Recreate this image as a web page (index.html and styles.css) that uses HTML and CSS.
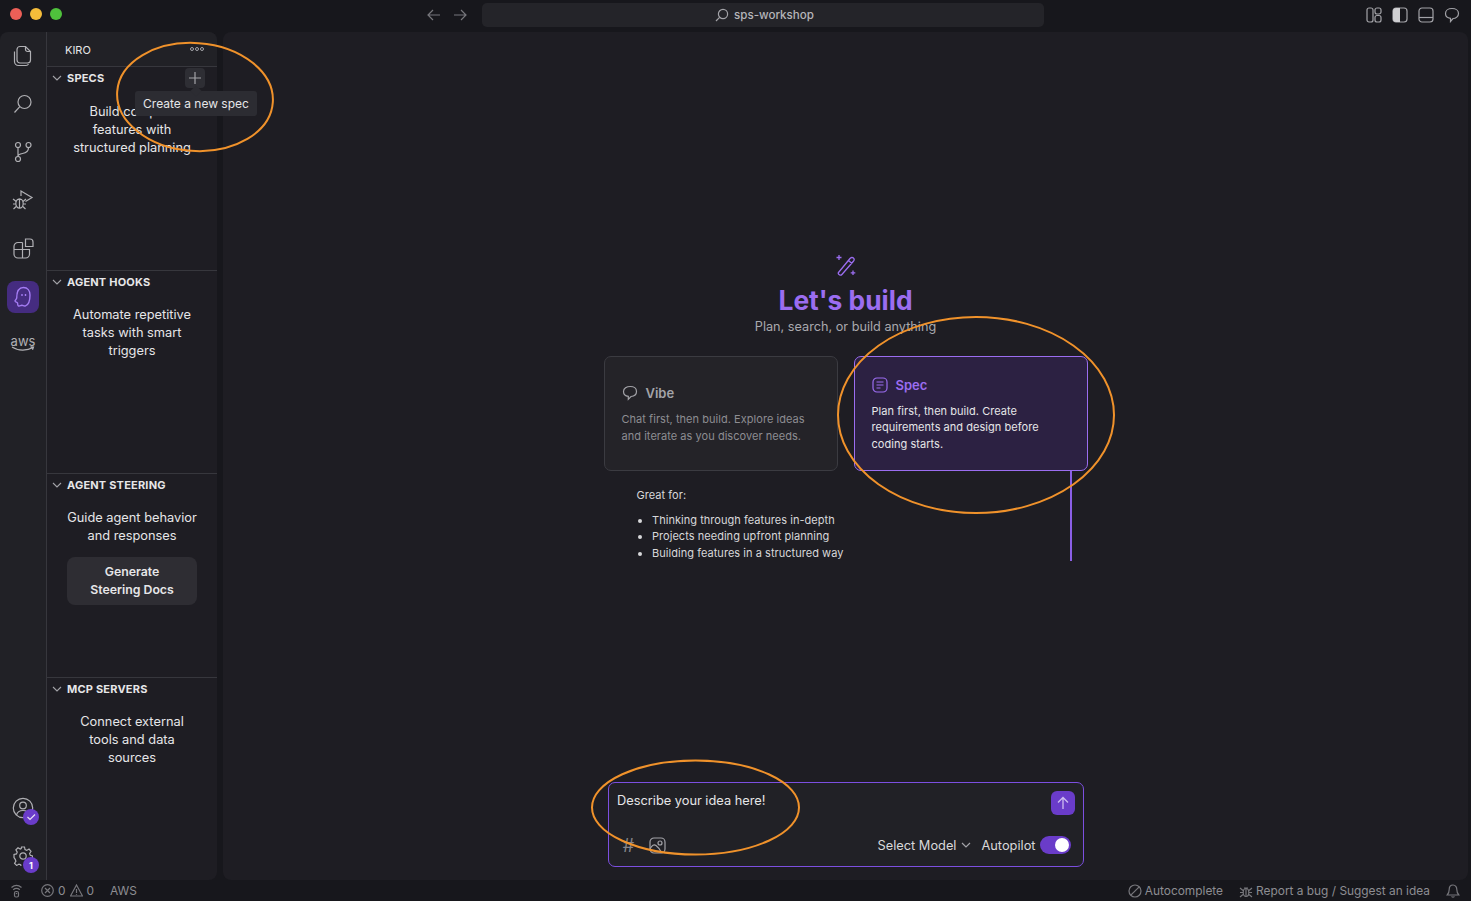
FILE: index.html
```html
<!DOCTYPE html>
<html lang="en">
<head>
  <meta charset="UTF-8">
  <title>sps-workshop</title>
  <link rel="stylesheet" href="styles.css">
</head>
<body>
  <!-- title bar -->
  <header class="titlebar">
    <div class="traffic">
      <span class="dot red"></span>
      <span class="dot yellow"></span>
      <span class="dot green"></span>
    </div>
    <div class="nav-arrows">
      <svg class="ico" width="16" height="16" viewBox="0 0 16 16"><path d="M14 8H2.500M7 3 2 8l5 5"/></svg>
      <svg class="ico" width="16" height="16" viewBox="0 0 16 16"><path d="M2 8h11.500M9 3l5 5-5 5"/></svg>
    </div>
    <div class="command">
      <svg class="ico" width="14" height="14" viewBox="0 0 14 14"><circle cx="8" cy="6" r="4.600"/><path d="M4.600 9.400 1 13"/></svg>
      <span>sps-workshop</span>
    </div>
    <div class="layout-icons">
      <svg class="ico" width="16" height="16" viewBox="0 0 16 16"><rect x="1" y="1" width="6" height="14" rx="2"/><rect x="9" y="1" width="6" height="6" rx="2"/><rect x="9" y="8.500" width="6" height="6.500" rx="2"/></svg>
      <svg class="ico" width="16" height="16" viewBox="0 0 16 16"><rect x="1" y="1" width="14" height="14" rx="3"/><path class="fill" d="M8 1H4a3 3 0 0 0-3 3v8a3 3 0 0 0 3 3h4z"/></svg>
      <svg class="ico" width="16" height="16" viewBox="0 0 16 16"><rect x="1" y="1" width="14" height="14" rx="3"/><path d="M1 10.500h14"/></svg>
      <svg class="ico" width="16" height="16" viewBox="0 0 16 16"><path d="M8 1.500c3.800 0 6.500 2 6.500 5s-2.700 5-5.500 5l-2.500 3v-3.200C3.500 11 1.500 9.300 1.500 6.500c0-3 2.700-5 6.500-5z"/></svg>
    </div>
  </header>

  <div class="workbench">
    <!-- activity bar -->
    <nav class="activity">
      <div class="activity-top">
        <a class="act-item">
          <svg class="ico" width="20" height="22" viewBox="0 0 20 22"><path d="M7 1.500h5.500L17.500 6.500v8.500a3 3 0 0 1-3 3H7a3 3 0 0 1-3-3V4.500a3 3 0 0 1 3-3z"/><path d="M12.500 1.500v3a2 2 0 0 0 2 2h3"/><path d="M1.500 6.500v10a4 4 0 0 0 4 4h7.500a3 3 0 0 0 2.500-1.500"/></svg>
        </a>
        <a class="act-item">
          <svg class="ico" width="20" height="20" viewBox="0 0 20 20"><circle cx="11.500" cy="8" r="6.500"/><path d="M6.800 12.700 1.500 18.500"/></svg>
        </a>
        <a class="act-item">
          <svg class="ico" width="20" height="22" viewBox="0 0 20 22"><circle cx="5" cy="4" r="2.500"/><circle cx="15.500" cy="4" r="2.500"/><circle cx="5" cy="18" r="2.500"/><path d="M5 6.500v9M15.500 6.500c0 4.500-3 5.500-6 6-2 .3-4.500 1-4.500 3"/></svg>
        </a>
        <a class="act-item">
          <svg class="ico" width="22" height="22" viewBox="0 0 22 22"><path d="M9 7V2l11 6.500-6.500 4"/><ellipse cx="7.500" cy="14.500" rx="3.700" ry="4.700"/><path d="M5 10.500h5M1 10l3.300 2.500M1 15h2.800M1.500 20l2.700-2.500M14 10l-3 2.500M14 15h-2.800M13.500 20l-2.700-2.500M7.500 10v9"/></svg>
        </a>
        <a class="act-item">
          <svg class="ico" width="21" height="21" viewBox="0 0 21 21"><path d="M9.500 4.500H5a4 4 0 0 0-4 4V16a4 4 0 0 0 4 4h7.500a4 4 0 0 0 4-4v-4.500h-15M9.500 4.500v15"/><path d="M12.500 1h4.500a3 3 0 0 1 3 3v4.500h-7.500z"/></svg>
        </a>
        <a class="act-item active">
          <svg class="kiro" width="18" height="22" viewBox="0 0 18 22"><path d="M9.500 1.500c4 0 6.500 3.200 6.500 7.500 0 4.800-.5 9.500-4.500 10.800-1.700.6-2.500-.8-3.700-.6-1.400.3-2.300 1.300-3.500.6-1-.6-.3-2-.8-2.800-.7-.9-2.300-.8-2.500-2 0-1.100 1.400-1.500 1.700-2.800C2.700 9.500 2.800 1.500 9.500 1.500z"/><path d="M8 8v2M11.500 8v2"/></svg>
        </a>
        <a class="act-item aws">aws
          <svg width="24" height="6" viewBox="0 0 24 6"><path d="M1 1c6 4 15 4 21 .5M19.500.8l3 .2-1 2.700"/></svg>
        </a>
      </div>
      <div class="activity-bottom">
        <a class="act-item">
          <svg class="ico" width="22" height="22" viewBox="0 0 22 22"><circle cx="11" cy="11" r="9.700"/><circle cx="11" cy="8.500" r="3.300"/><path d="M4.500 18c.8-3 3.500-4.500 6.500-4.500s5.700 1.500 6.500 4.500"/></svg>
          <span class="badge"><svg width="10" height="10" viewBox="0 0 10 10"><path d="m1.500 5 2.500 2.500 5-5"/></svg></span>
        </a>
        <a class="act-item">
          <svg class="ico" width="20" height="20" viewBox="0 0 20 20"><circle cx="10" cy="10" r="3.200"/><path d="M8.500 1h3l.5 2.600 1.700.8 2.300-1.300 2 2.200-1.400 2.200.7 1.800 2.200.6v3l-2.300.6-.7 1.700 1.300 2.200-2.100 2.100-2.200-1.300-1.700.7-.6 2.200h-3l-.5-2.300-1.800-.7-2.200 1.300-2.100-2.100 1.300-2.200-.7-1.700L1 11.500v-3l2.500-.6.700-1.800L2.900 3.900 5 1.800l2.200 1.300 1-.5z"/></svg>
          <span class="badge">1</span>
        </a>
      </div>
    </nav>

    <!-- side bar -->
    <aside class="sidebar">
      <div class="side-title">
        <span>KIRO</span>
        <span class="more"><i></i><i></i><i></i></span>
      </div>
      <section class="panel panel-specs">
        <h3 class="panel-head">
          <svg class="chev" width="10" height="10" viewBox="0 0 10 10"><path d="m1 3 4 4 4-4"/></svg>SPECS
          <span class="add-btn"><svg class="ico" width="14" height="14" viewBox="0 0 14 14"><path d="M7 1v12M1 7h12"/></svg></span>
        </h3>
        <p class="panel-text">Build complex<br>features with<br>structured planning</p>
        <div class="tooltip">Create a new spec</div>
      </section>
      <section class="panel">
        <h3 class="panel-head">
          <svg class="chev" width="10" height="10" viewBox="0 0 10 10"><path d="m1 3 4 4 4-4"/></svg>AGENT HOOKS
        </h3>
        <p class="panel-text">Automate repetitive<br>tasks with smart<br>triggers</p>
      </section>
      <section class="panel">
        <h3 class="panel-head">
          <svg class="chev" width="10" height="10" viewBox="0 0 10 10"><path d="m1 3 4 4 4-4"/></svg>AGENT STEERING
        </h3>
        <p class="panel-text">Guide agent behavior<br>and responses</p>
        <div class="gen-btn">Generate<br>Steering Docs</div>
      </section>
      <section class="panel">
        <h3 class="panel-head">
          <svg class="chev" width="10" height="10" viewBox="0 0 10 10"><path d="m1 3 4 4 4-4"/></svg>MCP SERVERS
        </h3>
        <p class="panel-text">Connect external<br>tools and data<br>sources</p>
      </section>
    </aside>

    <!-- editor -->
    <main class="editor">
      <div class="welcome">
        <svg class="wand" width="22" height="22" viewBox="0 0 22 22"><path d="M3.500 18.500 15 4.500c1-1.200 2.500-1.300 3.400-.5s.9 2.200 0 3.300L6.900 20.500c-.7.800-1.700.8-2.500.2-.9-.6-1.500-1.400-.9-2.200zM13.500 6.500l3.500 3"/><path d="M4 1v5M1.500 3.500h5M18 16.500v4.500M15.700 18.800h4.600"/></svg>
        <h1>Let's build</h1>
        <p class="sub">Plan, search, or build anything</p>
        <div class="cards">
          <div class="card">
            <div class="card-title">
              <svg class="ico" width="16" height="16" viewBox="0 0 16 16"><path d="M8.300 1.500c3.500 0 6.200 1.900 6.200 5s-2.700 4.800-5.500 5l-2.700 2.800v-2.900C3.300 11 1.500 9.300 1.500 6.500c0-3.100 3.200-5 6.800-5z"/></svg>
              <span>Vibe</span>
            </div>
            <p>Chat first, then build. Explore ideas and iterate as you discover needs.</p>
          </div>
          <div class="card selected">
            <div class="card-title">
              <svg class="ico" width="16" height="16" viewBox="0 0 16 16"><rect x="1" y="1" width="14" height="14" rx="4"/><path d="M4.500 5h7M4.500 8h7M4.500 11h4"/></svg>
              <span>Spec</span>
            </div>
            <p>Plan first, then build. Create requirements and design before coding starts.</p>
          </div>
        </div>
        <div class="great-for">
          <p>Great for:</p>
          <ul>
            <li>Thinking through features in-depth</li>
            <li>Projects needing upfront planning</li>
            <li>Building features in a structured way</li>
          </ul>
        </div>
      </div>

      <div class="chat">
        <div class="chat-top">
          <span class="prompt">Describe your idea here!</span>
          <button class="send"><svg width="14" height="14" viewBox="0 0 14 14"><path d="M7 13V1.500M2 6.500l5-5 5 5"/></svg></button>
        </div>
        <div class="chat-bottom">
          <div class="chat-tools">
            <span class="hash">#</span>
            <svg class="ico" width="17" height="17" viewBox="0 0 17 17"><rect x="1" y="1" width="15" height="15" rx="4"/><circle cx="11" cy="6" r="2"/><path d="M1 12c2-4 4-5 6-3.500s4 4 5.500 7"/></svg>
          </div>
          <div class="chat-opts">
            <span>Select Model</span>
            <svg class="ico" width="10" height="10" viewBox="0 0 10 10"><path d="m1 3 4 4 4-4"/></svg>
            <span class="pilot">Autopilot</span>
            <span class="toggle"><i></i></span>
          </div>
        </div>
      </div>
    </main>
  </div>

  <!-- status bar -->
  <footer class="statusbar">
    <div class="status-left">
      <svg class="ico" width="13" height="14" viewBox="0 0 13 14"><path d="M1.500 3.500c3-2.500 7-2.500 10 0M3.200 5.700c2-1.500 4.600-1.500 6.600 0"/><rect x="4.500" y="7.500" width="4" height="5.500" rx="1.500"/><path d="M5.800 9.500h1.400"/></svg>
      <span class="problems">
        <svg class="ico" width="13" height="13" viewBox="0 0 13 13"><circle cx="6.500" cy="6.500" r="5.800"/><path d="m4 4 5 5M9 4l-5 5"/></svg>0
        <svg class="ico" width="13" height="13" viewBox="0 0 13 13"><path d="M6.500 1 12.500 12H.5zM6.500 5v4M6.500 10v.8"/></svg>0
      </span>
      <span class="aws-label">AWS</span>
    </div>
    <div class="status-right">
      <span class="stat-item">
        <svg class="ico" width="14" height="14" viewBox="0 0 14 14"><circle cx="7" cy="7" r="6"/><path d="M2.800 11.200 11.200 2.800"/></svg>Autocomplete
      </span>
      <span class="stat-item">
        <svg class="ico" width="14" height="14" viewBox="0 0 14 14"><ellipse cx="7" cy="8.500" rx="2.800" ry="4"/><path d="M5 4h4M1 4l3 2.500M1 8.500h3M1 13l3-2.500M13 4l-3 2.500M13 8.500h-3M13 13l-3-2.500M7 4.500V12.500"/></svg>Report a bug / Suggest an idea
      </span>
      <svg class="ico" width="14" height="14" viewBox="0 0 14 14"><path d="M7 1c-2.500 0-3.800 2-3.800 4.500 0 3-.7 4-2 5.500h11.600c-1.300-1.500-2-2.500-2-5.500C10.800 3 9.500 1 7 1zM5.500 12.500c.4.700 2.600.7 3 0"/></svg>
    </div>
  </footer>

  <!-- orange callouts drawn on top of the screenshot -->
  <svg class="callouts" width="1471" height="901" viewBox="0 0 1471 901">
    <ellipse cx="195" cy="97" rx="78" ry="54" transform="rotate(4 195 97)"/>
    <ellipse cx="976" cy="415" rx="138" ry="98"/>
    <ellipse cx="695.500" cy="807.500" rx="103.500" ry="47"/>
  </svg>
</body>
</html>
```

FILE: styles.css
```css
* {
  box-sizing: border-box;
}
html, body {
  height: 100%;
}
body {
  margin: 0;
  display: flex;
  flex-direction: column;
  height: 901px;
  overflow: hidden;
  background: #17171c;
  color: #e6e6e8;
  font-family: Inter, "Noto Sans", sans-serif;
  font-size: 13px;
}
.ico {
  fill: none;
  stroke: #a3a3a8;
  stroke-width: 1.2;
  flex: none;
}
.ico .fill {
  fill: #cfcfd2;
  stroke: none;
}

/* title bar */
.titlebar {
  height: 32px;
  flex: none;
  display: flex;
  align-items: center;
  padding: 0 0 2px 10px;
}
.traffic {
  display: flex;
  gap: 8px;
  margin-top: -2px;
}
.dot {
  width: 12px;
  height: 12px;
  border-radius: 50%;
}
.red { background: #ed5f57; }
.yellow { background: #f5bd3a; }
.green { background: #4fc23c; }
.nav-arrows {
  display: flex;
  gap: 10px;
  margin-left: 364px;
}
.nav-arrows .ico {
  stroke: #77777c;
}
.command {
  width: 562px;
  height: 24px;
  margin-left: 14px;
  padding-left: 3px;
  background: #242429;
  border-radius: 5px;
  display: flex;
  align-items: center;
  justify-content: center;
  gap: 5px;
  font-size: 11.600px;
  font-weight: 500;
  color: #b5b5b9;
}
.layout-icons {
  display: flex;
  gap: 10px;
  margin-left: auto;
  margin-top: -1px;
  padding-right: 11px;
}

/* main area */
.workbench {
  flex: 1;
  min-height: 0;
  display: flex;
}
.activity {
  width: 47px;
  flex: none;
  background: #212126;
  border-right: 1px solid #37373d;
  border-top-left-radius: 8px;
  display: flex;
  flex-direction: column;
  justify-content: space-between;
}
.activity .ico {
  stroke: #b0b0b4;
}
.act-item {
  height: 48px;
  display: flex;
  flex-direction: column;
  align-items: center;
  justify-content: center;
  position: relative;
}
.act-item.active {
  width: 32px;
  height: 32px;
  margin: 9px 7px 7px;
  background: #452c80;
  border-radius: 8px;
}
.kiro {
  fill: none;
  stroke: #a47cf3;
  stroke-width: 1.4;
}
.aws {
  font-size: 13px;
  line-height: 10px;
  color: #b0b0b4;
}
.aws svg {
  fill: none;
  stroke: #b0b0b4;
  stroke-width: 1.2;
}
.badge {
  position: absolute;
  left: 23px;
  top: 25px;
  width: 16px;
  height: 16px;
  border-radius: 50%;
  background: #6a3cc9;
  color: #fff;
  font-size: 9px;
  font-weight: 700;
  display: flex;
  align-items: center;
  justify-content: center;
}
.badge svg {
  fill: none;
  stroke: #e6e0f5;
  stroke-width: 1.2;
}

/* side bar */
.sidebar {
  width: 170px;
  flex: none;
  background: #1e1d23;
  border-top-right-radius: 8px;
  border-bottom-right-radius: 8px;
  display: flex;
  flex-direction: column;
}
.side-title {
  height: 34px;
  flex: none;
  display: flex;
  align-items: center;
  justify-content: space-between;
  padding: 2px 13px 0 18px;
  font-size: 11px;
  background: #212126;
  border-top-right-radius: 8px;
}
.more {
  display: flex;
  gap: 1px;
  margin-top: -2px;
}
.more i {
  width: 4px;
  height: 4px;
  border: 1px solid #a3a3a8;
  border-radius: 50%;
}
.panel {
  flex: 1;
  position: relative;
  border-top: 1px solid #37373d;
  padding: 0 20px;
}
.panel-head {
  margin: 0 -20px;
  height: 22px;
  padding-left: 5px;
  display: flex;
  align-items: center;
  gap: 5px;
  font-size: 11px;
  font-weight: 700;
  letter-spacing: 0.2px;
  color: #e6e6e8;
}
.chev {
  fill: none;
  stroke: #a3a3a8;
  stroke-width: 1.1;
}
.add-btn {
  position: absolute;
  right: 12px;
  top: 1px;
  width: 20px;
  height: 20px;
  border-radius: 4px;
  background: #2e2e34;
  display: flex;
  align-items: center;
  justify-content: center;
}
.panel-text {
  margin: 13px -5px 0;
  text-align: center;
  font-size: 12.800px;
  line-height: 18px;
}
.panel-specs .panel-text {
  margin-top: 14px;
}
.gen-btn {
  margin-top: 12px;
  height: 48px;
  background: #2e2d33;
  border-radius: 8px;
  display: flex;
  align-items: center;
  justify-content: center;
  text-align: center;
  font-size: 12.300px;
  line-height: 18px;
  font-weight: 600;
}
.tooltip {
  position: absolute;
  left: 88px;
  top: 24px;
  width: 122px;
  height: 25px;
  background: #2c2c32;
  border-radius: 3px;
  font-size: 12px;
  display: flex;
  align-items: center;
  justify-content: center;
  white-space: nowrap;
}
.tooltip::before {
  content: "";
  position: absolute;
  top: -4px;
  left: 57px;
  width: 8px;
  height: 8px;
  background: #2c2c32;
  transform: rotate(45deg);
}

/* editor */
.editor {
  flex: 1;
  min-width: 0;
  margin: 0 3px 0 6px;
  background: #1e1d23;
  border-radius: 8px;
  display: flex;
  flex-direction: column;
  align-items: center;
}
.welcome {
  width: 484px;
  margin-top: 222px;
  display: flex;
  flex-direction: column;
  align-items: center;
}
.wand {
  fill: none;
  stroke: #9b6df0;
  stroke-width: 1.3;
}
h1 {
  margin: 8px 0 0;
  font-size: 26.400px;
  line-height: 32px;
  font-weight: 700;
  color: #9b6df0;
}
.sub {
  margin: 3px 0 0;
  font-size: 12.700px;
  line-height: 16px;
  color: #a9a9ae;
}
.cards {
  margin-top: 21px;
  width: 100%;
  display: flex;
  gap: 16px;
}
.card {
  flex: 1;
  height: 115px;
  padding: 2px 15px 0 17px;
  background: #242328;
  border: 1px solid #3b3b41;
  border-radius: 7px;
  display: flex;
  flex-direction: column;
  justify-content: center;
}
.card-title {
  display: flex;
  align-items: center;
  gap: 8px;
  font-size: 13px;
  font-weight: 600;
  color: #a3a3a8;
}
.card p {
  margin: 10px 0 0;
  font-size: 11px;
  line-height: 16.500px;
  letter-spacing: 0.04px;
  color: #8d8d92;
}
.card.selected {
  background: #2c2142;
  border-color: #9b6df0;
}
.card.selected .card-title {
  color: #9b6df0;
}
.card.selected .ico {
  stroke: #9b6df0;
}
.card.selected p {
  color: #e6e6e8;
}
.great-for {
  align-self: stretch;
  margin-right: 16px;
  height: 90px;
  border-right: 2px solid #8b5fe6;
  padding: 16px 0 0 33px;
  font-size: 11px;
  line-height: 16.500px;
  letter-spacing: 0.04px;
  color: #d8d8da;
}
.great-for p {
  margin: 0 0 8px;
}
.great-for ul {
  margin: 0;
  padding-left: 15.500px;
}

/* chat box */
.chat {
  width: 476px;
  height: 85px;
  margin-top: auto;
  margin-bottom: 13px;
  background: #212126;
  border: 1px solid #7c4fe0;
  border-radius: 7px;
  padding: 8px 8px 0;
  display: flex;
  flex-direction: column;
  justify-content: space-between;
}
.chat-top {
  display: flex;
  justify-content: space-between;
  align-items: flex-start;
  font-size: 12.800px;
  line-height: 17px;
}
.prompt {
  margin: 1px 0 0 0.500px;
}
.send {
  width: 24px;
  height: 24px;
  padding: 0;
  border: none;
  border-radius: 6px;
  background: #6a3cc9;
  display: flex;
  align-items: center;
  justify-content: center;
}
.send svg {
  fill: none;
  stroke: #cdbcf0;
  stroke-width: 1.3;
}
.chat-bottom {
  display: flex;
  justify-content: space-between;
  align-items: center;
  height: 34px;
  padding: 0 4px 8px 6px;
}
.chat-tools {
  display: flex;
  align-items: center;
  gap: 15px;
}
.hash {
  font-size: 18px;
  font-style: italic;
  color: #85858a;
}
.chat-opts {
  display: flex;
  align-items: center;
  gap: 5px;
  font-size: 12.800px;
  color: #d8d8da;
}
.pilot {
  margin-left: 5px;
  margin-right: -1px;
}
.toggle {
  width: 31px;
  height: 18px;
  border-radius: 9px;
  background: #6a3cc9;
  display: flex;
  align-items: center;
  justify-content: flex-end;
  padding-right: 2px;
}
.toggle i {
  width: 14px;
  height: 14px;
  background: #fff;
  border-radius: 50%;
}

/* status bar */
.statusbar {
  height: 21px;
  flex: none;
  display: flex;
  justify-content: space-between;
  align-items: center;
  padding: 0 11px 0 10px;
  font-size: 11.900px;
  color: #8d8d92;
}
.statusbar .ico {
  stroke: #77777c;
}
.status-left, .status-right {
  display: flex;
  align-items: center;
}
.problems {
  display: flex;
  align-items: center;
  gap: 4px;
  margin-left: 18px;
}
.aws-label {
  margin-left: 16px;
}
.stat-item {
  display: flex;
  align-items: center;
  gap: 3px;
  margin-right: 16px;
}

/* callouts */
.callouts {
  position: absolute;
  left: 0;
  top: 0;
  pointer-events: none;
}
.callouts ellipse {
  fill: none;
  stroke: #f0922b;
  stroke-width: 2;
}
```
